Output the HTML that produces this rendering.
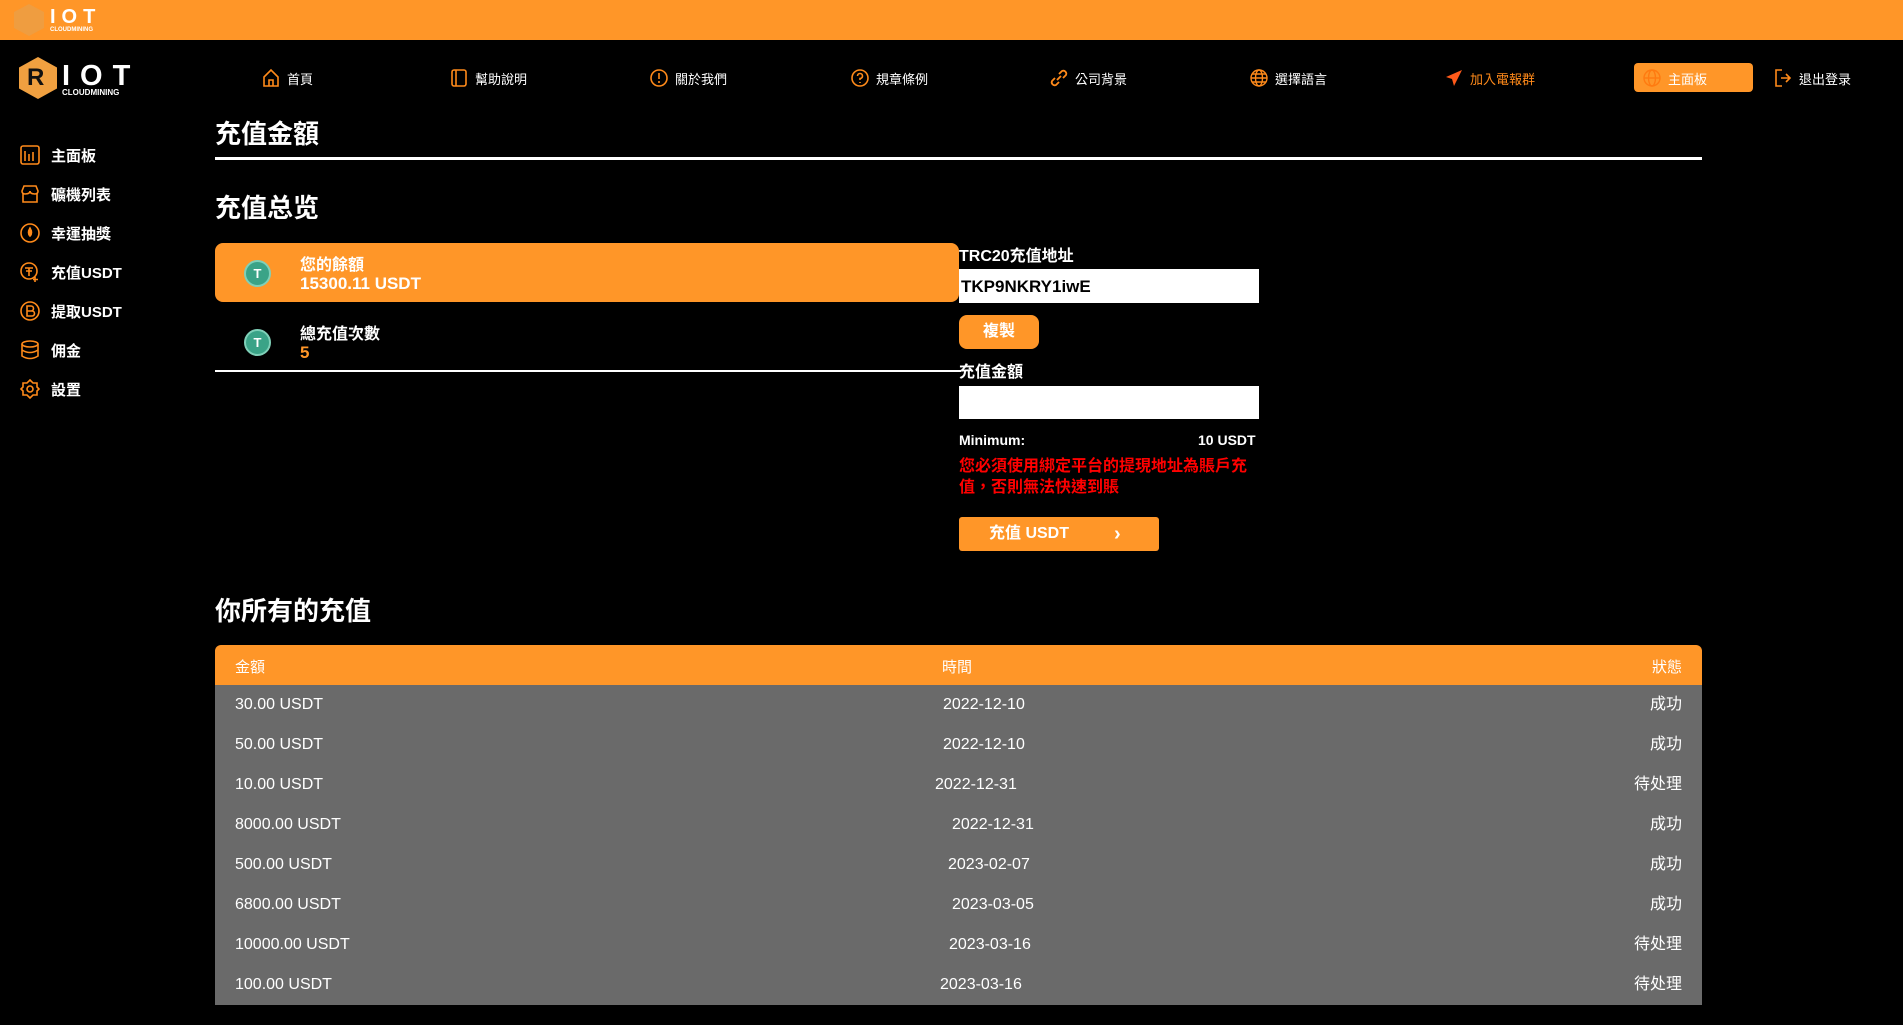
<!DOCTYPE html>
<html><head><meta charset="utf-8"><style>
*{margin:0;padding:0;box-sizing:border-box}
body{width:1903px;height:1025px;background:#000;color:#fff;font-family:"Liberation Sans","Noto Sans CJK TC",sans-serif;position:relative;overflow:hidden}
.a{position:absolute;white-space:nowrap}
.top{left:0;top:0;width:1903px;height:40px;background:#ff9628}
.nav{font-size:13px;top:68px;display:flex;align-items:center;gap:6px}
.nav svg{width:20px;height:20px}
.side{left:19px;font-size:15px;font-weight:bold;display:flex;align-items:center;gap:10px}
.side svg{width:22px;height:22px}
h1{font-size:26px;font-weight:bold}
.b{font-weight:bold}
.row{left:215px;width:1487px;height:40px;background:#6a6a6a;font-size:16px}
.row span{position:absolute;top:0;height:40px;line-height:40px}
</style></head><body>
<div class="a top"></div>
<div class="a" style="left:14px;top:4px;width:30px;height:32px;background:#e8a04a;clip-path:polygon(50% 0,100% 25%,100% 75%,50% 100%,0 75%,0 25%);opacity:.7"></div>
<div class="a b" style="left:50px;top:6px;font-size:20px;letter-spacing:6px">IOT</div>
<div class="a b" style="left:50px;top:27px;font-size:6px">CLOUDMINING</div>

<div class="a" style="left:19px;top:57px;width:38px;height:42px;background:#f0a040;clip-path:polygon(50% 0,100% 25%,100% 75%,50% 100%,0 75%,0 25%)"></div>
<div class="a b" style="left:27px;top:64px;font-size:24px;color:#111">R</div>
<div class="a b" style="left:62px;top:60px;font-size:29px;letter-spacing:10px">IOT</div>
<div class="a b" style="left:62px;top:88px;font-size:8px">CLOUDMINING</div>

<div class="a nav" style="left:261px"><svg viewBox="0 0 20 20" fill="none" stroke="#ff8a1a" stroke-width="1.6"><path d="M3 9L10 2L17 9V18H3Z M8 18V12H12V18"/></svg>首頁</div>
<div class="a nav" style="left:449px"><svg viewBox="0 0 20 20" fill="none" stroke="#ff8a1a" stroke-width="1.6"><rect x="3" y="2" width="14" height="16" rx="2"/><path d="M7 2V18"/></svg>幫助說明</div>
<div class="a nav" style="left:649px"><svg viewBox="0 0 20 20" fill="none" stroke="#ff8a1a" stroke-width="1.6"><circle cx="10" cy="10" r="8"/><path d="M10 5V11M10 13V15"/></svg>關於我們</div>
<div class="a nav" style="left:850px"><svg viewBox="0 0 20 20" fill="none" stroke="#ff8a1a" stroke-width="1.6"><circle cx="10" cy="10" r="8"/><path d="M7.5 8A2.5 2.5 0 1 1 10 10.5V12M10 14V15"/></svg>規章條例</div>
<div class="a nav" style="left:1049px"><svg viewBox="0 0 20 20" fill="none" stroke="#ff8a1a" stroke-width="1.8"><path d="M8 12L12 8M6 10L3 13A3 3 0 0 0 7 17L10 14M10 6L13 3A3 3 0 0 1 17 7L14 10"/></svg>公司背景</div>
<div class="a nav" style="left:1249px"><svg viewBox="0 0 20 20" fill="none" stroke="#ff8a1a" stroke-width="1.4"><circle cx="10" cy="10" r="8"/><ellipse cx="10" cy="10" rx="3.5" ry="8"/><path d="M2 10H18M3.5 6H16.5M3.5 14H16.5"/></svg>選擇語言</div>
<div class="a nav" style="left:1444px;color:#ff8a1a"><svg viewBox="0 0 20 20" fill="#ff5a1a"><path d="M18 2L2 9L8 11L10 18Z"/></svg>加入電報群</div>
<div class="a" style="left:1634px;top:63px;width:119px;height:29px;background:#ff9628;border-radius:4px"></div>
<div class="a nav" style="left:1642px"><svg viewBox="0 0 20 20" fill="none" stroke="#ff7a10" stroke-width="1.4"><circle cx="10" cy="10" r="8"/><ellipse cx="10" cy="10" rx="3.5" ry="8"/><path d="M2 10H18"/></svg>主面板</div>
<div class="a nav" style="left:1773px"><svg viewBox="0 0 20 20" fill="none" stroke="#ff8a1a" stroke-width="1.6"><path d="M9 2H3V18H9M8 10H17M13 6L17 10L13 14"/></svg>退出登录</div>

<div class="a side" style="top:144px"><svg viewBox="0 0 22 22" fill="none" stroke="#ff8a1a" stroke-width="1.6"><rect x="2" y="2" width="18" height="18" rx="2"/><path d="M6 7V17M10 10V17M14 8V17"/></svg>主面板</div>
<div class="a side" style="top:183px"><svg viewBox="0 0 22 22" fill="none" stroke="#ff8a1a" stroke-width="1.6"><path d="M3 8L5 3H17L19 8Q19 11 16 11Q11 11 11 8Q11 11 6 11Q3 11 3 8ZM4 11V19H18V11"/></svg>礦機列表</div>
<div class="a side" style="top:222px"><svg viewBox="0 0 22 22" fill="none" stroke="#ff8a1a" stroke-width="1.6"><circle cx="11" cy="11" r="9"/><path d="M11 6Q8 11 11 14Q14 11 11 6Z" fill="#ff8a1a"/></svg>幸運抽獎</div>
<div class="a side" style="top:261px"><svg viewBox="0 0 22 22" fill="none" stroke="#ff8a1a" stroke-width="1.6"><circle cx="10" cy="10" r="8"/><path d="M6 7H14M10 7V15M7 10H13M16 16V21M14 18.5H19"/></svg>充值USDT</div>
<div class="a side" style="top:300px"><svg viewBox="0 0 22 22" fill="none" stroke="#ff8a1a" stroke-width="1.6"><circle cx="11" cy="11" r="9"/><path d="M8 6H12A2.5 2.5 0 0 1 12 11H8ZM8 11H13A2.5 2.5 0 0 1 13 16H8ZM8 6V16"/></svg>提取USDT</div>
<div class="a side" style="top:339px"><svg viewBox="0 0 22 22" fill="none" stroke="#ff8a1a" stroke-width="1.6"><ellipse cx="11" cy="5" rx="8" ry="3"/><path d="M3 5V17Q11 22 19 17V5M3 11Q11 16 19 11"/></svg>佣金</div>
<div class="a side" style="top:378px"><svg viewBox="0 0 22 22" fill="none" stroke="#ff8a1a" stroke-width="1.6"><path d="M11 2L14 5H18V9L20 11L18 13V17H14L11 20L8 17H4V13L2 11L4 9V5H8Z"/><circle cx="11" cy="11" r="3"/></svg>設置</div>

<h1 class="a" style="left:215px;top:114px">充值金額</h1>
<div class="a" style="left:215px;top:157px;width:1487px;height:3px;background:#fff"></div>
<h1 class="a" style="left:215px;top:188px">充值总览</h1>

<div class="a" style="left:215px;top:243px;width:744px;height:59px;background:#ff9628;border-radius:8px"></div>
<div class="a" style="left:244px;top:260px;width:27px;height:27px;border-radius:50%;background:#3aa387;border:2px solid #7fd0b8;color:#fff;font-size:13px;font-weight:bold;text-align:center;line-height:23px">T</div>
<div class="a b" style="left:300px;top:251px;font-size:16px">您的餘額</div>
<div class="a b" style="left:300px;top:274px;font-size:17px">15300.11 USDT</div>
<div class="a" style="left:244px;top:329px;width:27px;height:27px;border-radius:50%;background:#3aa387;border:2px solid #7fd0b8;color:#fff;font-size:13px;font-weight:bold;text-align:center;line-height:23px">T</div>
<div class="a b" style="left:300px;top:320px;font-size:16px">總充值次數</div>
<div class="a b" style="left:300px;top:343px;font-size:17px;color:#ff9628">5</div>
<div class="a" style="left:215px;top:370px;width:746px;height:2px;background:#fff"></div>

<div class="a b" style="left:959px;top:242px;font-size:16px">TRC20充值地址</div>
<div class="a" style="left:959px;top:269px;width:300px;height:34px;background:#fff;color:#000;font-size:17px;font-weight:bold;padding:8px 2px">TKP9NKRY1iwE</div>
<div class="a b" style="left:959px;top:315px;width:80px;height:34px;background:#ff9628;border-radius:8px;text-align:center;line-height:34px;font-size:16px">複製</div>
<div class="a b" style="left:959px;top:358px;font-size:16px">充值金額</div>
<div class="a" style="left:959px;top:386px;width:300px;height:33px;background:#fff"></div>
<div class="a b" style="left:959px;top:432px;font-size:14px">Minimum:</div>
<div class="a b" style="left:1198px;top:432px;font-size:14px">10 USDT</div>
<div class="a b" style="left:959px;top:456px;font-size:16px;line-height:21px;color:#f00;white-space:normal;width:300px">您必須使用綁定平台的提現地址為賬戶充值，否則無法快速到賬</div>
<div class="a b" style="left:959px;top:517px;width:200px;height:34px;background:#ff9628;border-radius:3px;font-size:16px;line-height:34px;padding-left:30px">充值 USDT<span style="position:absolute;left:155px;font-size:20px">›</span></div>

<h1 class="a" style="left:215px;top:591px">你所有的充值</h1>
<div class="a" style="left:215px;top:645px;width:1487px;height:40px;background:#ff9628;border-radius:6px 6px 0 0;font-size:15px">
<span class="a" style="left:20px;top:11px">金額</span><span class="a" style="left:727px;top:11px">時間</span><span class="a" style="right:20px;top:11px">狀態</span></div>
<div class="a row" style="top:685px"><span style="left:20px">30.00 USDT</span><span style="left:728px">2022-12-10</span><span style="right:20px">成功</span></div>
<div class="a row" style="top:725px"><span style="left:20px">50.00 USDT</span><span style="left:728px">2022-12-10</span><span style="right:20px">成功</span></div>
<div class="a row" style="top:765px"><span style="left:20px">10.00 USDT</span><span style="left:720px">2022-12-31</span><span style="right:20px">待处理</span></div>
<div class="a row" style="top:805px"><span style="left:20px">8000.00 USDT</span><span style="left:737px">2022-12-31</span><span style="right:20px">成功</span></div>
<div class="a row" style="top:845px"><span style="left:20px">500.00 USDT</span><span style="left:733px">2023-02-07</span><span style="right:20px">成功</span></div>
<div class="a row" style="top:885px"><span style="left:20px">6800.00 USDT</span><span style="left:737px">2023-03-05</span><span style="right:20px">成功</span></div>
<div class="a row" style="top:925px"><span style="left:20px">10000.00 USDT</span><span style="left:734px">2023-03-16</span><span style="right:20px">待处理</span></div>
<div class="a row" style="top:965px"><span style="left:20px">100.00 USDT</span><span style="left:725px">2023-03-16</span><span style="right:20px">待处理</span></div>
</body></html>
